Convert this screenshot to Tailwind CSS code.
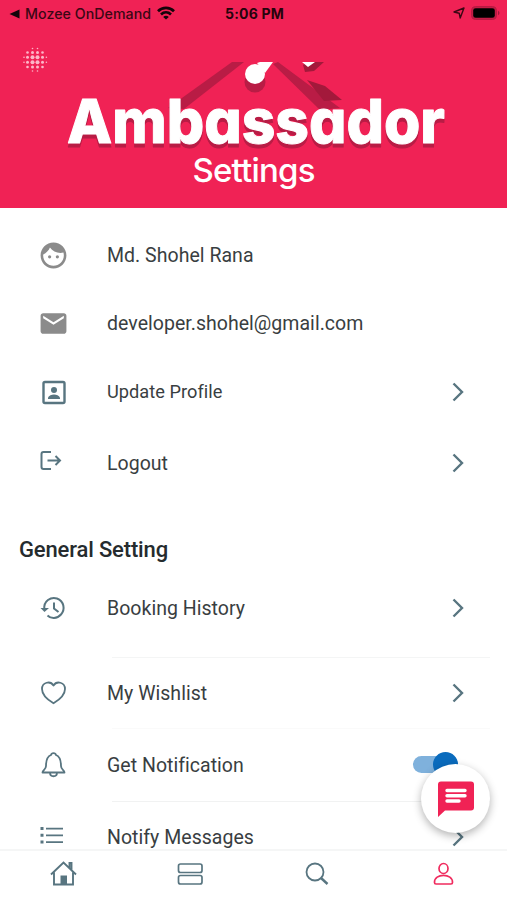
<!DOCTYPE html>
<html lang="en">
<head>
  <meta charset="UTF-8">
  <meta name="viewport" content="width=device-width, initial-scale=1.0">
  <title>Settings - Ambassador</title>
  <script src="https://cdn.jsdelivr.net/npm/@tailwindcss/browser@4"></script>
</head>
<body class="bg-white font-['Roboto',sans-serif] text-[#393e41]">
  <div class="relative flex flex-col h-[900px] w-[507px] overflow-hidden">

    <!-- Header -->
    <header class="h-[208px] shrink-0 bg-[#f02255]">
      <!-- Status bar -->
      <div class="grid grid-cols-3 items-center h-7 pl-[9px] pr-[7px] font-['Inter',sans-serif] text-[#3b0714]">
        <div class="flex items-center whitespace-nowrap">
          <svg class="w-[11px] h-[10px] shrink-0" viewBox="0 0 11 10"><path d="M0.5 5L10.5 0.5v9z" fill="#14040a" /></svg>
          <span class="ml-[5px] text-[14.2px] font-medium tracking-[0.05px]">Mozee OnDemand</span>
          <svg class="w-[18px] h-[14px] ml-[6px] mb-[2px] shrink-0" viewBox="0 0 18 14" fill="none" stroke="#14040a" stroke-width="2.7">
            <path d="M1 5.2C5.5.8 12.5.8 17 5.2M4 8.4c3-2.8 7-2.8 10 0" />
            <path d="M9 13.6L6.2 10.9c1.6-1.4 4-1.4 5.6 0z" fill="#14040a" stroke="none" />
          </svg>
        </div>
        <div class="pb-px text-center text-[14px] font-bold tracking-[0.2px] text-[#26040c]">5:06 PM</div>
        <div class="flex items-center justify-end gap-[6px] mb-[2px]">
          <svg class="w-3 h-3" viewBox="0 0 12 12" fill="none" stroke="#3b0714" stroke-width="1.4" stroke-linejoin="round"><path d="M11 1L7.2 11 6.2 6.2 1 5z" /></svg>
          <svg class="w-[29px] h-[14px]" viewBox="0 0 29 14">
            <rect x="0.5" y="0.5" width="25" height="13" rx="4" fill="#c31c46" stroke="#b81a42" />
            <rect x="2.2" y="2.2" width="21.6" height="9.6" rx="2.4" fill="#000" />
            <path d="M27 4.8c2 .9 2 3.5 0 4.4z" fill="#a0193b" />
          </svg>
        </div>
      </div>
      <!-- Menu dots and logo -->
      <svg class="block w-[507px] h-[126px] overflow-visible" viewBox="0 28 507 126">
        <g fill="#fcb6c8">
          <circle cx="32.5" cy="48.5" r="0.8" /><circle cx="37.5" cy="48.5" r="0.8" />
          <circle cx="27.5" cy="52.5" r="1.3" /><circle cx="32.5" cy="52.5" r="1.5" /><circle cx="37.5" cy="52.5" r="1.5" /><circle cx="42.5" cy="52.5" r="1.3" />
          <circle cx="24" cy="57.2" r="0.8" /><circle cx="27.5" cy="57.2" r="1.5" /><circle cx="32.5" cy="57.2" r="2" /><circle cx="37.5" cy="57.2" r="2" /><circle cx="42.5" cy="57.2" r="1.5" /><circle cx="46.4" cy="57.2" r="0.8" />
          <circle cx="24" cy="62.2" r="0.8" /><circle cx="27.5" cy="62.2" r="1.5" /><circle cx="32.5" cy="62.2" r="2" /><circle cx="37.5" cy="62.2" r="2" /><circle cx="42.5" cy="62.2" r="1.5" /><circle cx="46.4" cy="62.2" r="0.8" />
          <circle cx="27.5" cy="67" r="1.3" /><circle cx="32.5" cy="67" r="1.5" /><circle cx="37.5" cy="67" r="1.5" /><circle cx="42.5" cy="67" r="1.3" />
          <circle cx="32.5" cy="71" r="0.8" /><circle cx="37.5" cy="71" r="0.8" />
        </g>
        <!-- Roof -->
        <path d="M168 108L232 62h12l-60 47z" fill="#b91c45" />
        <path d="M273 64l5-2 62 46-20 2z" fill="#b91c45" />
        <path d="M307 80l18 6 17 14-18 1z" fill="#a3193b" />
        <path d="M303 65l4-3h17l-10 9-9 1z" fill="#a3193b" />
        <circle cx="255" cy="82" r="10.5" fill="#b91c45" />
        <circle cx="255" cy="74" r="10" fill="#fff" />
        <path d="M257 63l3-1h13l-8 11z" fill="#fff" />
        <path d="M302 62h13l-7 5z" fill="#fff" />
        <text class="font-['Inter',sans-serif] font-extrabold [font-feature-settings:'cv11'] drop-shadow-[0_4px_0_#b91c45]" x="67" y="143" font-size="61" textLength="378" lengthAdjust="spacingAndGlyphs" fill="#fff" stroke="#fff" stroke-width="1" stroke-linejoin="round">Ambassador</text>
      </svg>
      <h1 class="pt-px text-center text-white font-['Inter',sans-serif] font-medium text-[33px] leading-[30px] tracking-[-0.8px]">Settings</h1>
    </header>

    <!-- Settings list -->
    <main class="flex-1 min-h-0 overflow-hidden pt-[13px] text-[19.5px] leading-[30px] tracking-[0.03px]">
      <div class="flex items-center h-[68px] pl-[38px] pr-[42px]">
        <svg class="w-[31px] h-[31px]" viewBox="0 0 24 24" fill="#8b8b8b"><path d="M9 11.75a1.25 1.25 0 1 0 0 2.5 1.25 1.25 0 0 0 0-2.5zm6 0a1.25 1.25 0 1 0 0 2.5 1.25 1.25 0 0 0 0-2.5zM12 2C6.480 2 2 6.480 2 12s4.480 10 10 10 10-4.480 10-10S17.520 2 12 2zm0 18c-4.410 0-8-3.590-8-8 0-.29.02-.58.05-.86 2.360-1.050 4.230-2.980 5.210-5.370C11.070 8.330 14.050 10 17.420 10c.78 0 1.530-.09 2.250-.26.21.71.33 1.470.33 2.260 0 4.410-3.590 8-8 8z" /></svg>
        <span class="ml-[38px] pt-[2px]">Md. Shohel Rana</span>
      </div>
      <div class="flex items-center h-[68px] pl-[38px] pr-[42px]">
        <svg class="w-[31px] h-[31px]" viewBox="0 0 24 24" fill="#8b8b8b"><path d="M20 4H4c-1.100 0-1.990.9-1.990 2L2 18c0 1.100.9 2 2 2h16c1.100 0 2-.9 2-2V6c0-1.100-.9-2-2-2zm0 4l-8 5-8-5V6l8 5 8-5v2z" /></svg>
        <span class="ml-[38px] pt-[2px]">developer.shohel@gmail.com</span>
      </div>
      <div class="flex items-center h-[70px] pl-[38px] pr-[42px]">
        <svg class="w-[31px] h-[31px]" viewBox="0 0 31 31" fill="#587580"><rect x="5.500" y="5" width="21" height="21" rx="1.500" fill="none" stroke="#587580" stroke-width="2.400" /><circle cx="16" cy="13" r="3" /><path d="M10 22v-1.500c2-4 10-4 12 0V22z" /></svg>
        <span class="ml-[38px] mr-auto text-[18.2px]">Update Profile</span>
        <svg class="w-[14px] h-5" viewBox="0 0 14 20" fill="none" stroke="#587580" stroke-width="2.400"><path d="M2.500 1.500L11 10l-8.500 8.500" /></svg>
      </div>
      <div class="flex items-center h-[72px] pl-[38px] pr-[42px]">
        <svg class="w-[31px] h-[31px]" viewBox="0 0 31 31" fill="none" stroke="#587580" stroke-width="2"><path d="M13 4H5.500q-2 0-2 2v13q0 2 2 2H13M9.500 12.500H22M17.500 8L22 12.500l-4.500 4.500" /></svg>
        <span class="ml-[38px] mr-auto pt-[2px]">Logout</span>
        <svg class="w-[14px] h-5" viewBox="0 0 14 20" fill="none" stroke="#587580" stroke-width="2.400"><path d="M2.500 1.500L11 10l-8.500 8.500" /></svg>
      </div>

      <h2 class="mt-[25px] h-[50px] pl-[19px] leading-[52px] text-[22px] font-medium tracking-[-0.15px] text-[#252b2e]">General Setting</h2>

      <div class="flex items-center h-[68px] mb-[15px] pl-[38px] pr-[42px]">
        <svg class="w-[31px] h-[31px]" viewBox="0 0 31 31" fill="none" stroke="#587580" stroke-width="2"><path d="M6.500 16.500C5 8 13 3.500 19 5.500c7 2.500 8.500 11 4 16-4 4.500-10 4.500-13.500 1M16 9.500v6l4.500 3.500" /><path d="M2.500 15h8.500l-4.500 4z" fill="#587580" stroke="none" /></svg>
        <span class="ml-[38px] mr-auto pt-[2px]">Booking History</span>
        <svg class="w-[14px] h-5" viewBox="0 0 14 20" fill="none" stroke="#587580" stroke-width="2.400"><path d="M2.500 1.500L11 10l-8.500 8.500" /></svg>
      </div>
      <hr class="ml-28 mr-[17px] border-[#f4f5f5]">
      <div class="flex items-center h-[70px] pl-[38px] pr-[42px]">
        <svg class="w-[31px] h-[31px]" viewBox="0 0 31 31" fill="none" stroke="#587580" stroke-width="1.800" stroke-linejoin="round"><path d="M15.500 25.300C10 22 4 17 4 11c0-7 8.500-8.500 11.500-3.500C18.500 2.500 27 4 27 11c0 6-6 11-11.500 14.300z" /></svg>
        <span class="ml-[38px] mr-auto pt-px">My Wishlist</span>
        <svg class="w-[14px] h-5" viewBox="0 0 14 20" fill="none" stroke="#587580" stroke-width="2.400"><path d="M2.500 1.500L11 10l-8.500 8.500" /></svg>
      </div>
      <hr class="ml-28 mr-[17px] border-[#fafafa]">
      <div class="flex items-center h-[72px] pl-[38px] pr-[49px]">
        <svg class="w-[31px] h-[31px]" viewBox="0 0 31 31" fill="none" stroke="#587580" stroke-width="1.800" stroke-linejoin="round"><path d="M4.500 22.500h22c0-2-3.500-3-3.500-6.500 0-6-1-9.500-5-11-.5-2.500-4.500-2.500-5 0-4 1.500-5 5-5 11 0 3.500-3.500 4.500-3.500 6.500zM12 22.500c0 5 7 5 7 0" /></svg>
        <span class="ml-[38px] mr-auto pt-[2px]">Get Notification</span>
        <div class="flex items-center justify-end w-[45px] h-[17px] mb-[2px] rounded-full bg-[#7fb1dc]">
          <div class="w-[25px] h-[25px] shrink-0 rounded-full bg-[#0a6bbd]"></div>
        </div>
      </div>
      <hr class="ml-28 mr-[17px] border-[#f1f2f2]">
      <div class="flex items-center h-[70px] pl-[38px] pr-[42px]">
        <svg class="w-[31px] h-[31px]" viewBox="0 0 31 31" fill="#587580"><path d="M2.500 5h3v3h-3zM2.500 11.800h3v3h-3zM2.500 18.500h3v3h-3zM8 5.700h17v1.800H8zM8 12.400h17v1.800H8zM8 19.200h17v1.800H8z" /></svg>
        <span class="ml-[38px] mr-auto pt-[2px]">Notify Messages</span>
        <svg class="w-[14px] h-5" viewBox="0 0 14 20" fill="none" stroke="#587580" stroke-width="2.400"><path d="M2.500 1.500L11 10l-8.500 8.500" /></svg>
      </div>
    </main>

    <!-- Bottom navigation -->
    <nav class="grid grid-cols-4 justify-items-center items-center h-[51px] pb-[3px] shrink-0 border-t-2 border-[#f5f6f6] bg-white">
      <svg class="w-[28px] h-[28px]" viewBox="0 0 28 28" fill="none" stroke="#587580" stroke-width="1.900"><path d="M2 14.500L14.500 2.500 27 14.500M5 12.500v12h19v-12M20.500 8V3h2v7" /><path d="M11.500 15.500h6.500v9h-6.500z" fill="#587580" stroke="none" /></svg>
      <svg class="w-[28px] h-[28px]" viewBox="0 0 28 28" fill="none" stroke="#587580" stroke-width="1.700"><rect x="2.500" y="4" width="23.500" height="8.500" rx="2" /><rect x="2.500" y="15.500" width="23.500" height="8.500" rx="2" /></svg>
      <svg class="w-[28px] h-[28px]" viewBox="0 0 28 28" fill="none" stroke="#587580" stroke-width="1.800"><circle cx="12" cy="12" r="8.500" /><path d="M18 18l6.500 6" stroke-width="2.400" /></svg>
      <svg class="w-[28px] h-[28px]" viewBox="0 0 28 28" fill="none" stroke="#f02b5e" stroke-width="1.700"><ellipse cx="13.500" cy="8.500" rx="4.500" ry="5" /><path d="M4.500 22.500c-.5-9.500 18.500-9.500 18 0q0 1.500-1.500 1.500H6q-1.500 0-1.500-1.500z" /></svg>
    </nav>

    <!-- Chat button -->
    <button class="absolute left-[421px] top-[764px] flex items-center justify-center w-[69px] h-[69px] rounded-full bg-white shadow-[0_3px_9px_rgba(0,0,0,0.3)]">
      <svg class="w-9 h-9" viewBox="0 0 36 36"><path d="M3 0.500h30a3 3 0 0 1 3 3v23a3 3 0 0 1-3 3H7L0 36V3.500a3 3 0 0 1 3-3z" fill="#f02255" /><path d="M9 9.500h18M9 14.800h18M9 20h12" stroke="#fff" stroke-width="3.400" stroke-linecap="round" /></svg>
    </button>
  </div>
</body>
</html>
